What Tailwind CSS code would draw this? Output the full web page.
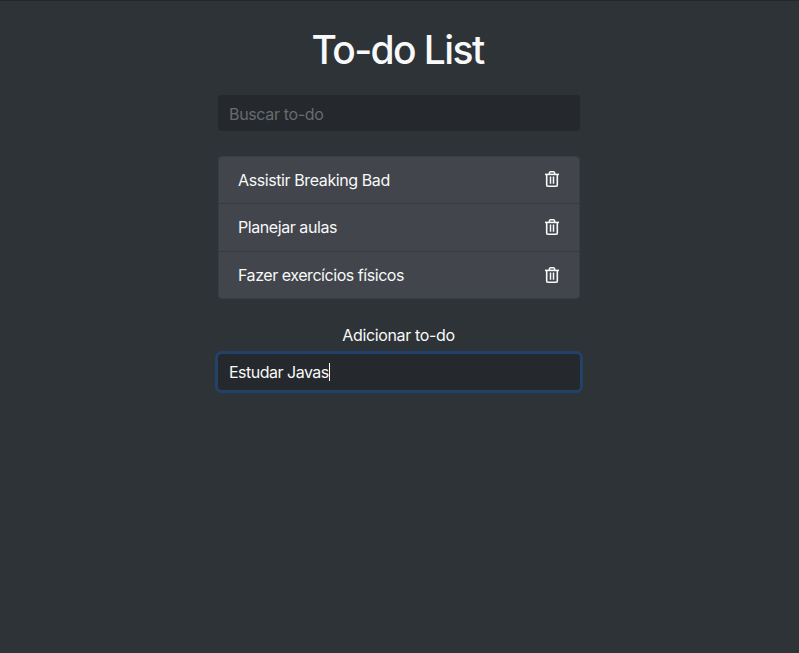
<!DOCTYPE html>
<html lang="pt-BR">
<head>
<meta charset="utf-8">
<title>To-do List</title>
<script src="https://cdn.jsdelivr.net/npm/@tailwindcss/browser@4"></script>
</head>
<body class="min-h-screen border-t border-[#25262a] bg-[#2e3337] font-['Inter',sans-serif] text-base text-[#f8f9fa]">
<svg class="hidden">
  <symbol id="trash" viewBox="0 0 14 16" fill="none" stroke="currentColor">
    <path d="M0 3.400h14" stroke-width="1.600"/>
    <path d="M4.400 3V2.100Q4.400.800 5.700.800h2.600Q9.600.800 9.600 2.100V3" stroke-width="1.500"/>
    <path d="M1.700 3.500v10.700q0 1 1 1h8.600q1 0 1-1V3.500" stroke-width="1.600"/>
    <path d="M5.500 5.500v7.300M8.500 5.500v7.300" stroke-width="1.500"/>
  </symbol>
</svg>
<main class="ml-[218px] flex w-[362px] flex-col">
  <header class="flex flex-col pt-[25px]">
    <h1 class="h-12 pr-[3px] text-center text-[39px] leading-[48px] font-[530] tracking-[-1.6px]"><span>To-do List</span></h1>
    <div class="mt-[21px] flex h-[36px] items-center rounded bg-[#25282c] px-[11px] pt-[2px] text-[#686c71]"><span class="tracking-[-0.34px]">Buscar to-do</span></div>
  </header>
  <ul class="mt-[25px] flex h-[143px] flex-col divide-y divide-[#373b3f] rounded border border-[#3a3d42] bg-[#42454b]">
    <li class="flex flex-1 items-center justify-between pr-5 pl-[19px]"><span class="tracking-[-0.4px]">Assistir Breaking Bad</span><svg class="mb-0.5 h-4 w-3.5"><use href="#trash"/></svg></li>
    <li class="flex flex-1 items-center justify-between pr-5 pl-[19px]"><span class="tracking-[-0.43px]">Planejar aulas</span><svg class="h-4 w-3.5"><use href="#trash"/></svg></li>
    <li class="flex flex-1 items-center justify-between pr-5 pl-[19px]"><span class="tracking-[-0.45px]">Fazer exercícios físicos</span><svg class="h-4 w-3.5"><use href="#trash"/></svg></li>
  </ul>
  <form class="mt-6 flex flex-col">
    <label class="h-6 pr-px text-center leading-6"><span class="tracking-[-0.36px]">Adicionar to-do</span></label>
    <div class="mt-[7px] flex h-[36px] items-center rounded bg-[#25282c] px-[11px] ring-3 ring-[#214269]"><span class="tracking-[-0.5px]">Estudar Javas</span><i class="h-[18px] w-px bg-white"></i></div>
  </form>
</main>
</body>
</html>
